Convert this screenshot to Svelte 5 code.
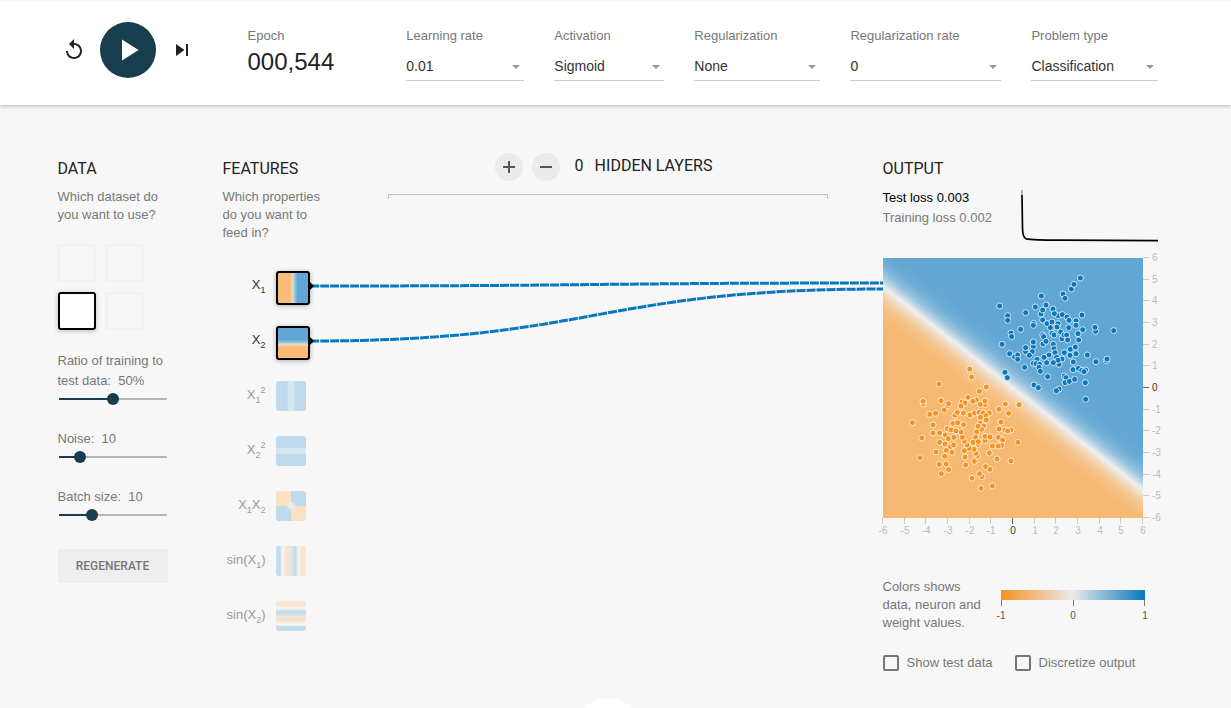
<script>
  const controls = [
    { id: 'rate', label: 'Learning rate', value: '0.01', options: ['0.001', '0.01', '0.03', '0.1'] },
    { id: 'activation', label: 'Activation', value: 'Sigmoid', options: ['ReLU', 'Tanh', 'Sigmoid', 'Linear'] },
    { id: 'regularization', label: 'Regularization', value: 'None', options: ['None', 'L1', 'L2'] },
    { id: 'regrate', label: 'Regularization rate', value: '0', options: ['0', '0.001', '0.01', '0.1'] },
    { id: 'problem', label: 'Problem type', value: 'Classification', options: ['Classification', 'Regression'] }
  ];

  const datasets = ['Circle', 'Exclusive or', 'Gaussian', 'Spiral'];
  let dataset = $state('Gaussian');

  let sliders = $state([
    { id: 'ratio', label: 'Ratio of training to test data:', unit: '%', min: 0, max: 100, value: 50 },
    { id: 'noise', label: 'Noise:', unit: '', min: 0, max: 50, value: 10 },
    { id: 'batch', label: 'Batch size:', unit: '', min: 1, max: 30, value: 10 }
  ]);
  const share = (s) => (s.value - s.min) / (s.max - s.min);

  const features = [
    { id: 'x', active: true, parts: [['X', '1', '']] },
    { id: 'y', active: true, parts: [['X', '2', '']] },
    { id: 'xx', active: false, parts: [['X', '1', '2']] },
    { id: 'yy', active: false, parts: [['X', '2', '2']] },
    { id: 'xy', active: false, parts: [['X', '1', ''], ['X', '2', '']] },
    { id: 'sinx', active: false, parts: [['sin(X', '1', ''], [')', '', '']] },
    { id: 'siny', active: false, parts: [['sin(X', '2', ''], [')', '', '']] }
  ];

  // Samples are stored on a grid of thirds of a plot unit.
  const positive = [
    29,153, 53,182, 53,196, 63,234, 65,245, 36,268, 59,296, 74,306, 83,300, 83,313, 92,223, 107,173,
    104,337, 45,352, 52,368, 136,156, 154,123, 153,177, 158,165, 168,150, 189,162, 204,182, 193,176,
    217,179, 231,186, 237,196, 236,218, 258,197, 258,211, 276,180, 219,117, 225,130, 244,102, 252,88,
    271,69, 317,229, 315,217, 371,227, 278,224, 264,236, 266,255, 158,195, 171,206, 186,201, 181,218,
    204,206, 201,216, 131,205, 130,211, 212,231, 186,235, 192,240, 158,240, 161,245, 159,267, 168,259,
    130,275, 130,261, 127,290, 107,290, 107,278, 118,301, 216,251, 222,240, 230,240, 233,255, 190,268,
    192,281, 195,293, 223,293, 241,283, 240,301, 256,276, 258,296, 292,300, 318,320, 349,317, 351,312,
    250,321, 216,312, 200,307, 207,328, 204,316, 190,323, 170,323, 177,300, 162,307, 141,313, 130,325,
    138,326, 149,328, 147,337, 151,349, 173,365, 223,363, 228,368, 225,383, 238,379, 254,373, 249,344,
    265,340, 275,346, 287,345, 282,350, 286,383, 132,390, 145,398, 207,402, 199,407, 287,433
  ];
  const negative = [
    284,27, 290,51, 192,72, 334,81, 313,94, 279,112, 145,132, 144,124, 198,122, 208,150, 218,137, 221,131,
    164,163, 182,160, 112,188, 174,195, 174,219, 140,234, 135,293, 183,276, 194,219, 194,247, 210,252,
    211,225, 217,206, 220,236, 234,190, 240,166, 247,157, 248,188, 265,159, 266,194, 261,126, 270,129,
    258,138, 285,165, 304,120, 294,124, 299,159, 312,157, 330,134, 316,133, 330,123, 324,159, 343,159,
    333,167, 316,172, 334,180, 316,190, 326,198, 320,208, 309,199, 305,216, 302,232, 310,253, 294,247,
    310,245, 330,241, 330,229, 345,231, 372,148, 391,132, 401,160, 432,134, 378,186, 372,207, 408,210,
    390,210, 398,213, 376,236, 370,232, 383,240, 380,256, 370,258, 352,258, 343,279, 366,297, 408,303,
    429,247, 332,320, 345,328, 352,378, 318,385, 321,350, 314,341, 291,355, 272,315, 308,287, 298,304,
    303,280, 297,268, 282,265, 270,291, 268,272, 276,255, 268,244, 262,232, 258,216, 228,210, 243,213,
    237,232, 226,260, 236,255, 231,277, 214,271, 209,289, 193,313, 214,312, 221,329, 199,341
  ];
  const place = (flat, dx, dy) =>
    Array.from({ length: flat.length / 2 }, (_, i) => [flat[2 * i] / 3 + dx, flat[2 * i + 1] / 3 + dy]);
  const groups = [
    { color: '#f59322', points: place(negative, -8, 102) },
    { color: '#0877bd', points: place(positive, 107, -3) }
  ];

  const ticks = Array.from({ length: 13 }, (_, i) => i - 6);
  const pos = (t) => Math.round(((t + 6) / 12) * 260);

  // Stops follow the network's smooth response across the boundary.
  const stops = Array.from({ length: 17 }, (_, i) => {
    const v = Math.max(-1, Math.min(1, 1.02 * Math.tanh((i - 8) / 2.8)));
    const end = v < 0 ? [245, 147, 34] : [8, 119, 189];
    const mix = [232, 234, 235].map((c, k) => Math.round(c + (end[k] - c) * Math.abs(v)));
    return { offset: i / 16, color: `rgb(${mix.join(',')})` };
  });
</script>

<header>
  <div class="page bar">
    <div class="playback">
      <button class="icon" aria-label="Reset">
        <svg width="24" height="24" viewBox="0 0 24 24"><path d="M12 5V1L7 6l5 5V7c3.31 0 6 2.69 6 6s-2.69 6-6 6-6-2.69-6-6H4c0 4.42 3.58 8 8 8s8-3.58 8-8-3.58-8-8-8z" /></svg>
      </button>
      <button class="play" aria-label="Run">
        <svg width="36" height="36" viewBox="0 0 24 24"><path d="M8 5v14l11-7z" /></svg>
      </button>
      <button class="icon" aria-label="Step">
        <svg width="24" height="24" viewBox="0 0 24 24"><path d="M6 18l8.500-6L6 6v12zM16 6v12h2V6h-2z" /></svg>
      </button>
    </div>
    <div class="epoch">
      <span class="label">Epoch</span>
      <output>000,544</output>
    </div>
    <div class="selects">
      {#each controls as c}
        <div class="control">
          <label class="label" for={c.id}>{c.label}</label>
          <div class="select">
            <select id={c.id} value={c.value}>
              {#each c.options as o}<option>{o}</option>{/each}
            </select>
          </div>
        </div>
      {/each}
    </div>
  </div>
</header>

<main>
  <div class="page columns">
    <section class="data">
      <h4>Data</h4>
      <p>Which dataset do you want to use?</p>
      <div class="thumbs">
        {#each datasets as d}
          <button class="thumb" class:selected={dataset === d} aria-label={d} onclick={() => (dataset = d)}></button>
        {/each}
      </div>
      <div class="sliders">
        {#each sliders as s}
          <div class="slider">
            <label for={s.id}>{s.label}&nbsp; {s.value}{s.unit}</label>
            <input id={s.id} type="range" min={s.min} max={s.max} bind:value={s.value} style="--share: {share(s)}" />
          </div>
        {/each}
      </div>
      <button class="regenerate">Regenerate</button>
    </section>

    <section class="features">
      <h4>Features</h4>
      <p>Which properties do you want to feed in?</p>
      <div class="rows">
        {#each features as f}
          <div class="feature" class:active={f.active}>
            <span class="name">{#each f.parts as [base, sub, sup]}{base}{#if sub}<sub>{sub}</sub>{/if}{#if sup}<sup>{sup}</sup>{/if}{/each}</span>
            <button class="tile {f.id}" aria-label="Toggle feature {f.id}"></button>
          </div>
        {/each}
      </div>
    </section>

    <section class="layers">
      <div class="layer-controls">
        <button class="round" aria-label="Add layer"><svg width="18" height="18" viewBox="0 0 18 18"><path d="M3 9h12M9 3v12" /></svg></button>
        <button class="round" aria-label="Remove layer"><svg width="18" height="18" viewBox="0 0 18 18"><path d="M3 9h12" /></svg></button>
        <span class="count">0</span>
        <span>Hidden layers</span>
      </div>
      <div class="bracket"></div>
    </section>

    <section class="result">
      <h4>Output</h4>
      <div class="losses">
        <div>
          <div class="test">Test loss 0.003</div>
          <div>Training loss 0.002</div>
        </div>
        <svg class="chart" width="138" height="54" viewBox="0 0 138 54" fill="none">
          <path d="M2 2V7" stroke="#999" stroke-width="1.500" />
          <path d="M2 7L2.500 40Q2.700 49.500 6 50.800Q13 52 40 52.200L138 52.700" stroke="#000" stroke-width="1.700" />
        </svg>
      </div>
      <svg class="plot" width="290" height="280" viewBox="0 0 290 280">
        <defs>
          <linearGradient id="field" gradientUnits="userSpaceOnUse" x1="105" y1="162" x2="155" y2="98">
            {#each stops as s}<stop offset={s.offset} stop-color={s.color} />{/each}
          </linearGradient>
        </defs>
        <rect width="260" height="260" fill="url(#field)" opacity="0.627" />
        {#each groups as g}
          {#each g.points as [x, y]}
            <circle cx={x} cy={y} r="3" fill={g.color} stroke="#fff" stroke-opacity="0.75" />
          {/each}
        {/each}
        {#each ticks as t}
          <g class="tick" class:zero={t === 0}>
            <path d="M{pos(t) - 0.5} 260v6" />
            <text x={pos(t)} y="276" text-anchor="middle">{t}</text>
            <path d="M260 {pos(-t) - 0.5}h6" />
            <text x="269" y={pos(-t) + 3}>{t}</text>
          </g>
        {/each}
      </svg>
      <div class="legend">
        <p>Colors shows data, neuron and weight values.</p>
        <svg width="158" height="34" viewBox="0 0 158 34">
          <defs>
            <linearGradient id="scale">
              <stop offset="0" stop-color="#f59322" />
              <stop offset="0.5" stop-color="#e8eaeb" />
              <stop offset="1" stop-color="#0877bd" />
            </linearGradient>
          </defs>
          <rect x="6" width="144" height="10" fill="url(#scale)" />
          <path d="M6.500 10v6M78.500 10v6M149.500 10v6" stroke="#777" />
          <g class="scale-text">
            <text x="6" y="29">-1</text><text x="78" y="29">0</text><text x="150" y="29">1</text>
          </g>
        </svg>
      </div>
      <div class="checks">
        <label><input type="checkbox" />Show test data</label>
        <label><input type="checkbox" />Discretize output</label>
      </div>
    </section>

    <svg class="links" viewBox="0 0 573 72" preserveAspectRatio="none" fill="none">
      <path class="link" d="M0 11C286 11 286 8 573 8" />
      <path class="link" d="M0 66C286 66 286 14 573 14" />
      <path d="M0 7l4 4-4 4zM0 62l4 4-4 4z" fill="#000" />
    </svg>
  </div>
  <a class="more" href="#about" aria-label="More"></a>
</main>

<style>
  :global(body) {
    background: #f7f7f7;
    color: #777;
    font: 13px/18px 'Liberation Sans', Arial, sans-serif;
  }
  button, select, input { font: inherit; margin: 0; padding: 0; }
  button { border: 0; background: none; cursor: pointer; }
  svg { display: block; }
  p, h4 { margin: 0; font-weight: 400; }
  .page { max-width: 1100px; margin: 0 auto; }

  header {
    position: relative;
    padding-right: 16px;
    background: linear-gradient(#f7f7f7, #fff 2px);
    box-shadow: 0 1px 4px rgba(0, 0, 0, 0.28);
  }
  .bar { display: flex; align-items: flex-start; padding: 22px 0 24px; }
  .playback { display: flex; align-items: center; height: 56px; gap: 14px; padding-left: 4px; }
  .icon { display: grid; place-items: center; width: 24px; height: 24px; fill: #222; }
  .play { display: grid; place-items: center; width: 56px; height: 56px; border-radius: 50%; background: #183d4e; fill: #fff; }
  .epoch { margin-left: 54px; padding-top: 5px; }
  .epoch output { display: block; margin-top: 2px; font-size: 24px; line-height: 30px; color: #222; }
  .label { display: block; line-height: 18px; }
  .selects { flex: 1; display: grid; grid-template-columns: 118fr 110fr 126fr 151fr 126fr; gap: 30px; margin-left: 72px; padding-top: 5px; }
  .select { position: relative; margin-top: 7px; border-bottom: 1px solid #ccc; }
  .select::after {
    content: '';
    position: absolute;
    right: 4px;
    top: 13px;
    border: 4px solid transparent;
    border-top-color: #999;
    border-bottom: 0;
    pointer-events: none;
  }
  select { display: block; width: 100%; height: 28px; border: 0; background: none; appearance: none; font-size: 14px; color: #333; }

  main { position: relative; min-height: calc(100vh - 105px); padding-right: 16px; overflow: hidden; box-sizing: border-box; }
  .columns { position: relative; display: grid; grid-template-columns: 110px 110px minmax(300px, 1fr) 275px; gap: 55px; padding-top: 48px; }
  h4, .layer-controls { font: 400 16px/32px Roboto, sans-serif; text-transform: uppercase; color: #222; }
  h4 { margin-bottom: 3px; }

  .thumbs { display: grid; grid-template-columns: 38px 38px; gap: 10px; margin-top: 20px; }
  .thumb { height: 38px; border: 2px solid #f2f2f2; border-radius: 3px; }
  .thumb.selected { border-color: #000; background: #fff; box-shadow: 0 1px 5px rgba(0, 0, 0, 0.25); }
  .sliders { display: grid; gap: 20px; margin-top: 21px; }
  .slider label { display: block; line-height: 20px; }
  .slider input {
    display: block;
    width: calc(100% + 10px);
    height: 18px;
    margin: 0 -5px;
    appearance: none;
    background:
      linear-gradient(#183d4e, #183d4e) 6px 7px / calc((100% - 12px) * var(--share)) 2px no-repeat,
      linear-gradient(#b5b5b5, #b5b5b5) 6px 7px / calc(100% - 12px) 2px no-repeat;
  }
  .slider input::-webkit-slider-thumb { appearance: none; width: 12px; height: 12px; margin-top: -2px; border-radius: 50%; background: #183d4e; }
  .regenerate { width: 100%; height: 34px; margin-top: 24px; border-radius: 2px; background: #eee; color: #777; font: 500 12px/34px Roboto, sans-serif; text-transform: uppercase; }

  .features p { width: 104px; }
  .rows { margin-top: 29px; }
  .feature { display: flex; gap: 10px; height: 55px; color: #999; }
  .name { width: 43px; text-align: right; line-height: 28px; white-space: nowrap; }
  .active .name { color: #333; line-height: 28px; }
  sub, sup { font-size: 9px; line-height: 0; }
  sub { vertical-align: -4px; }
  sup { vertical-align: 6px; }
  .tile { width: 30px; height: 30px; border-radius: 3px; }
  .active .tile { box-sizing: content-box; border: 2px solid #000; box-shadow: 0 1px 5px rgba(0, 0, 0, 0.3); }
  .x { background: linear-gradient(90deg, #f9bb76 40%, #ecdccb 50%, #9dc5df 55%, #61a7d4 65%); }
  .y { background: linear-gradient(#61a7d4 38%, #8fbfdd 47%, #ecdccb 54%, #f9bb76 64%); }
  .xx { background: linear-gradient(90deg, #bedaec 37%, #d6e7ef 42%, #d6e7ef 58%, #bedaec 63%); }
  .yy { background: linear-gradient(#bedaec 37%, #d6e7ef 42%, #d6e7ef 58%, #bedaec 63%); }
  .xy { background: radial-gradient(circle at center, #e9edec 2px, transparent 5px), conic-gradient(#bedaec 25%, #fce0c2 0 50%, #bedaec 0 75%, #fce0c2 0); }
  .sinx { background: linear-gradient(90deg, #c6deec, #bfdbec 12%, #f6f6f4 22%, #fbe0c6 36%, #ebe8e2 48%, #bedaec 64%, #f6f6f4 76%, #fae4cf 86%, #fae6d4); }
  .siny { background: linear-gradient(#fae6d4, #fae4cf 14%, #f6f6f4 24%, #bedaec 36%, #ebe8e2 52%, #fbe0c6 64%, #f6f6f4 78%, #bfdbec 88%, #c6deec); }

  .layer-controls { display: flex; align-items: center; justify-content: center; height: 28px; padding-right: 8px; }
  .layer-controls span { line-height: 24px; margin-bottom: 2px; }
  .round { display: grid; place-items: center; width: 28px; height: 28px; margin-right: 9px; border-radius: 50%; background: #ebebeb; stroke: #555; stroke-width: 2px; }
  .count { margin: 0 11px 0 6px; }
  .bracket { height: 4px; margin-top: 13px; border: 1px solid #c4c4c4; border-bottom: 0; }

  .losses { display: flex; justify-content: space-between; height: 70px; line-height: 20px; }
  .test { color: #000; }
  .plot { overflow: visible; }
  .tick path { stroke: #ccc; }
  .tick text, .scale-text { font: 10px 'Liberation Sans', Arial, sans-serif; fill: #bbb; }
  .tick.zero path { stroke: #666; }
  .tick.zero text { fill: #333; }
  .scale-text { fill: #555; text-anchor: middle; }
  .legend { display: flex; align-items: flex-start; gap: 12px; margin-top: 40px; }
  .legend p { width: 100px; }
  .legend svg { margin-top: 12px; }
  .checks { display: flex; gap: 22px; margin-top: 22px; white-space: nowrap; }
  .checks label { display: flex; align-items: center; gap: 8px; }
  .checks input { width: 16px; height: 16px; appearance: none; border: 2px solid #757575; border-radius: 2px; }

  .links { position: absolute; left: 252px; top: 170px; width: calc(100% - 527px); height: 72px; overflow: visible; pointer-events: none; }
  .link { stroke: #0877bd; stroke-width: 3px; stroke-dasharray: 9 1; }
  .more { position: absolute; left: calc(50% - 42px); bottom: -58px; width: 68px; height: 68px; border-radius: 50%; background: #fff; }
</style>
